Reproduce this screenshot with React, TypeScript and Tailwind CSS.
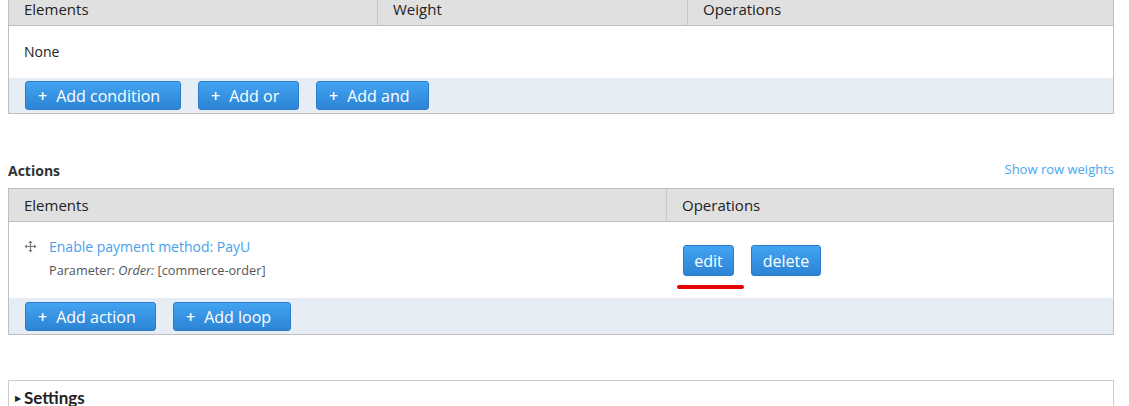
import React from 'react';

const font = { fontFamily: '"Open Sans", "Liberation Sans", sans-serif' };

const Btn: React.FC<{ label: string; plus?: boolean; className?: string }> = ({ label, plus, className }) => (
  <button
    className={`flex items-center rounded-[3px] border border-[#2b7cc9] bg-gradient-to-b from-[#42a4f2] to-[#2c84d4] text-white text-[16px] leading-none ${className ?? ''}`}
  >
    {plus && <span className="mr-[9px] text-[16px] font-semibold leading-none">+</span>}
    {label}
  </button>
);

const DragIcon = () => (
  <svg width="13" height="13" viewBox="0 0 13 13" className="text-[#777]">
    <path d="M6.5 0.5 L4.5 3 H8.5 Z M6.5 12.5 L4.5 10 H8.5 Z M0.5 6.5 L3 4.5 V8.5 Z M12.5 6.5 L10 4.5 V8.5 Z" fill="currentColor" />
    <path d="M6.5 2.5 V10.5 M2.5 6.5 H10.5" stroke="currentColor" strokeWidth="1.2" />
  </svg>
);

export default function App() {
  return (
    <div className="w-[1129px] h-[406px] overflow-hidden bg-white text-[#222]" style={font}>
      <div className="px-[8px] pr-[15px]">
        {/* Conditions table (top cut off) */}
        <div className="-mt-[11px] border border-[#bfbfbf]">
          <div className="flex h-[36px] bg-[#e0e0e0] border-b border-[#bfbfbf] text-[15px] pt-[4px]">
            <div className="w-[369px] flex items-center pl-[15px] border-r border-[#c6c6c6]">Elements</div>
            <div className="w-[310px] flex items-center pl-[15px] border-r border-[#c6c6c6]">Weight</div>
            <div className="flex-1 flex items-center pl-[15px]">Operations</div>
          </div>
          <div className="h-[52px] flex items-center pl-[15px] pb-[1px] text-[14px]">None</div>
          <div className="h-[35px] bg-[#e6edf4] flex items-start pt-[3px] pl-[16px] gap-[17px]">
            <Btn plus label="Add condition" className="h-[29px] w-[156px] pl-[12px]" />
            <Btn plus label="Add or" className="h-[29px] w-[101px] pl-[12px]" />
            <Btn plus label="Add and" className="h-[29px] w-[113px] pl-[12px]" />
          </div>
        </div>

        {/* Actions */}
        <div className="mt-[46px] flex items-center justify-between h-[20px]">
          <div className="text-[14px] font-bold text-[#333]">Actions</div>
          <a className="text-[13px] text-[#46a6f2]">Show row weights</a>
        </div>
        <div className="mt-[8px] border border-[#bfbfbf]">
          <div className="flex h-[33px] bg-[#e0e0e0] border-b border-[#bfbfbf] text-[15px]">
            <div className="w-[658px] flex items-center pl-[15px] border-r border-[#c6c6c6]">Elements</div>
            <div className="flex-1 flex items-center pl-[15px]">Operations</div>
          </div>
          <div className="h-[76px] flex">
            <div className="w-[659px] flex pl-[15px] pt-[15px]">
              <div className="mt-[3px] mr-[12px]"><DragIcon /></div>
              <div>
                <a className="block text-[14px] leading-[20px] text-[#46a2ee]">Enable payment method: PayU</a>
                <div className="mt-[5px] text-[12.7px] leading-[16px] text-[#555]">
                  Parameter: <em>Order:</em> [commerce-order]
                </div>
              </div>
            </div>
            <div className="relative flex-1 flex items-start pt-[23px] pl-[15px] gap-[17px]">
              <Btn label="edit" className="h-[31px] w-[51px] justify-center" />
              <Btn label="delete" className="h-[31px] w-[70px] justify-center" />
              <div className="absolute left-[9px] top-[63px] w-[67px] h-[4px] rounded-full bg-[#e60000] blur-[0.6px]" />
            </div>
          </div>
          <div className="h-[36px] bg-[#e6edf4] flex items-start pt-[4px] pl-[16px] gap-[17px]">
            <Btn plus label="Add action" className="h-[29px] w-[131px] pl-[12px]" />
            <Btn plus label="Add loop" className="h-[29px] w-[118px] pl-[12px]" />
          </div>
        </div>

        {/* Settings fieldset */}
        <div className="mt-[45px] border border-[#cccccc] h-[60px]">
          <div className="flex items-center pl-[6px] pt-[7px] leading-[20px]">
            <span className="text-[8px] text-[#222] mr-[3px]">▶</span>
            <span className="text-[17px] font-bold" style={{ fontFamily: 'Lato, "Open Sans", sans-serif' }}>Settings</span>
          </div>
        </div>
      </div>
    </div>
  );
}
